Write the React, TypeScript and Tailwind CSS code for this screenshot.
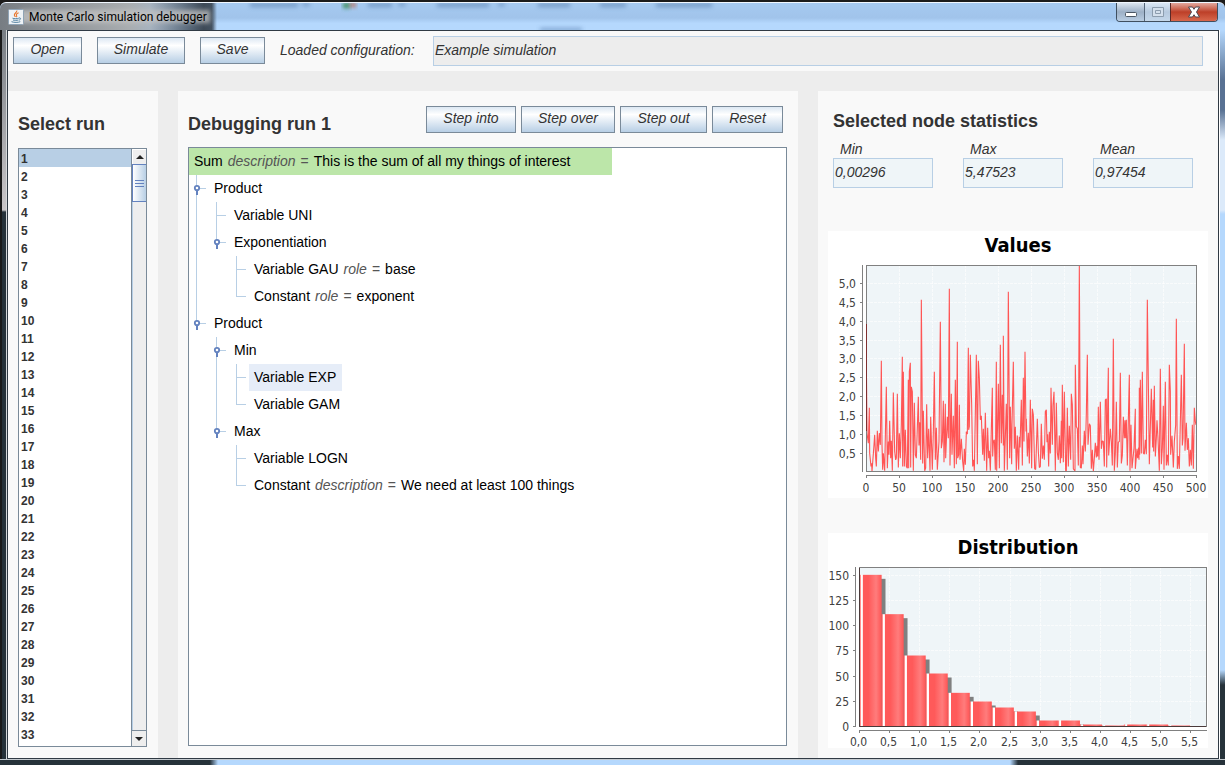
import React, { useState } from "react";

const VALUES_TRACE =
  "139,300 142,625 146,655 149,549 150,685 154,725 156,715 157,740 160,700 163,660 165,630 168,700 170,725 173,618 176,680 179,625 182,660 185,408 187,660 189,735 191,685 195,738 200,486 203,730 206,650 208,690 210,588 213,700 215,648 218,738 221,503 225,680 228,705 230,700 233,507 236,728 239,625 242,700 245,600 248,396 249,725 251,441 254,725 257,615 260,725 263,730 266,465 267,730 269,440 272,414 273,728 275,486 278,500 281,738 284,534 287,690 290,700 296,516 298,662 300,592 303,705 305,225 309,716 311,558 315,738 318,730 321,538 324,700 327,612 331,738 333,576 338,735 341,620 344,441 347,705 350,609 353,735 358,650 362,291 365,670 368,650 371,528 373,712 377,537 378,700 383,576 386,640 389,192 391,722 395,507 397,690 401,573 404,730 407,465 410,718 413,351 414,700 417,690 419,540 421,705 425,642 429,710 432,738 434,672 437,720 440,620 443,628 446,369 447,615 449,605 452,390 456,540 459,725 462,705 464,738 470,390 473,718 476,408 479,460 482,585 485,573 489,690 491,612 494,708 497,564 501,738 504,609 507,700 509,678 512,738 518,489 519,695 521,650 524,645 527,735 530,411 531,738 536,477 539,730 542,360 545,655 548,510 551,662 551,333 554,738 560,537 563,735 566,201 570,700 572,546 576,718 577,600 581,411 584,672 587,606 590,738 593,632 597,735 599,636 " +
  "601,668 605,525 608,722 611,459 613,650 616,381 619,620 620,582 623,695 626,624 629,716 632,525 636,730 638,552 641,570 645,732 648,734 653,582 656,680 659,728 662,725 665,597 668,702 671,662 674,705 677,560 680,555 682,652 684,628 687,725 689,621 692,686 694,489 698,660 700,540 703,501 707,738 710,534 713,684 716,705 719,632 722,715 725,588 726,700 728,480 731,712 734,501 738,738 740,738 743,549 746,725 749,603 753,705 755,507 758,540 761,732 766,738 767,420 770,605 773,612 776,722 779,122 782,728 785,730 788,662 790,718 794,618 797,680 800,567 803,390 805,660 809,597 812,603 815,732 818,675 821,740 824,700 827,654 830,698 832,663 834,695 836,546 838,705 842,531 845,672 848,648 851,650 854,725 857,525 860,522 861,728 866,429 867,692 872,612 875,650 878,722 881,342 884,738 887,685 890,531 893,728 896,652 899,650 902,444 905,716 908,692 911,576 914,640 916,586 918,640 920,585 923,722 929,450 931,738 934,600 937,730 940,700 943,670 947,552 947,732 952,672 954,700 957,668 958,705 959,489 960,690 962,465 965,686 968,441 971,685 974,688 977,645 980,688 983,225 989,718 995,492 999,668 1001,525 1002,680 1004,483 1007,695 1010,640 1012,586 1015,640 1019,738 1022,432 1025,718 1028,670 1031,543 1033,735 1037,471 1040,722 1043,690 1046,722 1049,420 1052,500 1053,690 1057,633 1061,728 1064,650 1068,600 1070,282 1073,732 1076,694 1079,732 1085,450 1088,662 1090,640 1094,357 1096,678 1100,594 1103,675 1106,640 1109,725 1112,675 1115,722 1118,600 1121,732 1124,549 1127,590 1129,600";

const BAR_TOPS = [134, 252, 376, 430, 488, 514, 532, 544, 571, 571, 583, 586, 583, 583, 586];
const BAR_WIDTH = 66;

type Guide = "pipe" | "tee" | "end" | "knob" | "knobEnd" | "none";

interface TreeNode {
  guides: Guide[];
  label: string;
  attribute?: string;
  value?: string;
}

const NODES: TreeNode[] = [
  { guides: [], label: "Sum", attribute: "description", value: "This is the sum of all my things of interest" },
  { guides: ["knob"], label: "Product" },
  { guides: ["pipe", "tee"], label: "Variable UNI" },
  { guides: ["pipe", "knobEnd"], label: "Exponentiation" },
  { guides: ["pipe", "none", "tee"], label: "Variable GAU", attribute: "role", value: "base" },
  { guides: ["pipe", "none", "end"], label: "Constant", attribute: "role", value: "exponent" },
  { guides: ["knobEnd"], label: "Product" },
  { guides: ["none", "knob"], label: "Min" },
  { guides: ["none", "pipe", "tee"], label: "Variable EXP" },
  { guides: ["none", "pipe", "end"], label: "Variable GAM" },
  { guides: ["none", "knobEnd"], label: "Max" },
  { guides: ["none", "none", "tee"], label: "Variable LOGN" },
  { guides: ["none", "none", "end"], label: "Constant", attribute: "description", value: "We need at least 100 things" },
];

function TreeGuide({ kind }: { kind: Guide }) {
  const full = kind === "pipe" || kind === "tee" || kind === "knob";
  const knob = kind === "knob" || kind === "knobEnd";
  return (
    <svg width="20" height="27" viewBox="0 0 20 27" className="shrink-0" aria-hidden="true">
      {kind !== "none" && <path d={full ? "M7.5 0V27" : "M7.5 0V14"} stroke="#b8cfe5" />}
      {kind !== "none" && kind !== "pipe" && <path d="M7 13.5H17" stroke="#b8cfe5" />}
      {knob && (
        <>
          <path d="M8 15V20" stroke="#6382bf" strokeWidth="2" />
          <circle cx="8" cy="13" r="2.2" fill="#fff" stroke="#6382bf" strokeWidth="1.8" />
        </>
      )}
    </svg>
  );
}

function MetalButton({ children, className = "" }: { children: React.ReactNode; className?: string }) {
  return (
    <button
      type="button"
      className={
        "h-[27px] border border-[#7a8a99] bg-linear-to-b from-[#dde8f3] via-white via-30% to-[#b8cfe5] pb-[2px] text-sm leading-[23px] text-[#333] italic " +
        className
      }
    >
      {children}
    </button>
  );
}

function StatField({ id, label, value }: { id: string; label: string; value: string }) {
  return (
    <div className="w-[100px]">
      <label htmlFor={id} className="block pl-[7px] text-sm leading-[18px] italic">
        {label}
      </label>
      <input
        id={id}
        readOnly
        value={value}
        className="block h-[30px] w-full border border-[#b8cfe5] bg-[#eff5f8] px-px pb-[2px] text-sm italic outline-none"
      />
    </div>
  );
}

const CHART_FONT = "[font-family:'DejaVu_Sans_Condensed','DejaVu_Sans',sans-serif]";

function ValuesChart() {
  const yTicks = [5, 4.5, 4, 3.5, 3, 2.5, 2, 1.5, 1, 0.5];
  const xTicks = [0, 50, 100, 150, 200, 250, 300, 350, 400, 450, 500];
  const yOf = (v: number) => Math.round(240.5 - v * 37.7) + 0.5;
  const xOf = (v: number) => Math.round(38 + v * 0.66) + 0.5;
  return (
    <svg viewBox="0 0 380 267" className={"block w-full bg-white " + CHART_FONT} role="img" aria-label="Values">
      <text x="190" y="21" textAnchor="middle" fontSize="20" fontWeight="bold" fill="#000">
        Values
      </text>
      <rect x="38" y="34" width="331" height="207" fill="#eff5f8" />
      {yTicks.map((v) => (
        <g key={v}>
          <path d={`M38 ${yOf(v)}H368`} stroke="#fff" strokeOpacity=".6" strokeDasharray="3 1" />
          <path d={`M32 ${yOf(v)}H35`} stroke="#808080" />
          <text x="28" y={yOf(v) + 4} textAnchor="end" fontSize="12" fill="#404040">
            {v.toFixed(1).replace(".", ",")}
          </text>
        </g>
      ))}
      {xTicks.map((v) => (
        <g key={v}>
          <path d={`M${xOf(v)} 34V240`} stroke="#fff" strokeOpacity=".6" strokeDasharray="3 1" />
          <path d={`M${xOf(v)} 244V247`} stroke="#808080" />
          <text x={xOf(v) - 0.5} y="261" textAnchor="middle" fontSize="12" fill="#404040">
            {v}
          </text>
        </g>
      ))}
      <path d="M34.5 34V241M38 244.5H369" stroke="#808080" />
      <svg x="38" y="34.5" width="330" height="206" viewBox="139 122 990 618" preserveAspectRatio="none">
        <polyline points={VALUES_TRACE} fill="none" stroke="#ff5555" strokeWidth="3.3" strokeLinejoin="bevel" />
      </svg>
      <rect x="38.5" y="34.5" width="330" height="206" fill="none" stroke="#808080" />
      <path d="M38.5 93V200" stroke="#803030" />
    </svg>
  );
}

function DistributionChart() {
  const yTicks = [150, 125, 100, 75, 50, 25, 0];
  const xTicks = [0, 0.5, 1, 1.5, 2, 2.5, 3, 3.5, 4, 4.5, 5, 5.5];
  const yOf = (v: number) => Math.round(193 - v * 1.008) + 0.5;
  const xOf = (v: number) => Math.round(31 + v * 60.2) + 0.5;
  return (
    <svg
      viewBox="0 0 380 215"
      className={"block w-full overflow-visible bg-white " + CHART_FONT}
      role="img"
      aria-label="Distribution"
    >
      <defs>
        <linearGradient id="bar">
          <stop offset="0" stopColor="#ff5555" />
          <stop offset=".05" stopColor="#ff9a9a" />
          <stop offset=".08" stopColor="#fff" />
          <stop offset=".13" stopColor="#fff" />
          <stop offset=".17" stopColor="#ff5a5a" />
          <stop offset=".4" stopColor="#ff5a5a" />
          <stop offset=".75" stopColor="#ff7c7c" />
          <stop offset="1" stopColor="#ff5555" />
        </linearGradient>
      </defs>
      <text x="190" y="21" textAnchor="middle" fontSize="20" fontWeight="bold" fill="#000">
        Distribution
      </text>
      <rect x="31" y="34" width="348" height="160" fill="#eff5f8" />
      {yTicks.map((v) => (
        <g key={v}>
          <path d={`M31 ${yOf(v)}H378`} stroke="#fff" strokeOpacity=".6" strokeDasharray="3 1" />
          <path d={`M25 ${yOf(v)}H28`} stroke="#808080" />
          <text x="21" y={yOf(v) + 4} textAnchor="end" fontSize="12" fill="#404040">
            {v}
          </text>
        </g>
      ))}
      {xTicks.map((v) => (
        <g key={v}>
          <path d={`M${xOf(v)} 34V193`} stroke="#fff" strokeOpacity=".6" strokeDasharray="3 1" />
          <path d={`M${xOf(v)} 197V200`} stroke="#808080" />
          <text x={xOf(v) - 1} y="213" textAnchor="middle" fontSize="12" fill="#404040">
            {v.toFixed(1).replace(".", ",")}
          </text>
        </g>
      ))}
      <path d="M27.5 34V194M31 197.5H379" stroke="#808080" />
      <svg x="31.5" y="34.5" width="347" height="159" viewBox="118 112 1041 477" preserveAspectRatio="none">
        {BAR_TOPS.map((top, i) => (
          <rect key={i} x={130 + i * 66.1} y={top + 12} width={BAR_WIDTH} height={Math.max(0, 577 - top)} fill="#808080" />
        ))}
        {BAR_TOPS.map((top, i) => (
          <rect key={i} x={118 + i * 66.1} y={top} width={BAR_WIDTH + 0.4} height={589 - top} fill="url(#bar)" />
        ))}
      </svg>
      <rect x="31.5" y="34.5" width="347" height="159" fill="none" stroke="#808080" />
      <path d="M31.5 35V193.5H378" fill="none" stroke="#4a3a3a" />
    </svg>
  );
}

function JavaIcon() {
  return (
    <svg width="16" height="16" viewBox="0 0 16 16" className="z-10 shrink-0" aria-hidden="true">
      <rect x=".5" y=".5" width="15" height="15" rx="1" fill="#eef2f6" stroke="#8fa3b5" />
      <path
        d="M8.8 1.5C9.4 3.6 5.6 4.4 6.4 6.4c.2.6.8 1 .9 1.6M10.6 3.8C8.6 4.7 7.8 5.6 8.6 6.7c.4.6.2 1-.2 1.5"
        fill="none"
        stroke="#e8762c"
        strokeWidth="1.1"
      />
      <path
        d="M4.5 9.2c1.5.7 4.8.6 6.3 0M5 11c1.5.5 3.8.5 5.3 0M3.500 12.700c2.400.9 6.800.9 8.800 0M11 9c2-.6 2.300 1.600-.2 2.200"
        fill="none"
        stroke="#5382a1"
      />
    </svg>
  );
}

function TitleBar() {
  return (
    <header className="relative flex h-7 items-start justify-between rounded-t-md border-t border-white/80 bg-linear-to-b from-[#a5c9f0] via-[#a1c4eb] via-55% to-[#b5d8fd] to-75%">
      <div className="flex h-[27px] w-[214px] items-center gap-[5px] rounded-tl-md bg-linear-to-r from-[#777d83] via-[#a9adb0] via-60% to-[#a1c4eb] pl-2">
        <JavaIcon />
        <h1 className="z-10 text-xs whitespace-nowrap text-black [font-family:Roboto,'Open_Sans',sans-serif]">
          Monte Carlo simulation debugger
        </h1>
      </div>
      <svg className="pointer-events-none absolute top-0 left-0" width="720" height="27" aria-hidden="true">
        <defs>
          <filter id="soft" x="-20%" y="-100%" width="140%" height="300%">
            <feGaussianBlur stdDeviation="2" />
          </filter>
          <linearGradient id="shade">
            <stop offset="0" stopColor="#2c353e" stopOpacity="0" />
            <stop offset=".8" stopColor="#2c353e" stopOpacity=".85" />
            <stop offset=".92" stopColor="#2c353e" stopOpacity=".8" />
            <stop offset="1" stopColor="#2c353e" stopOpacity="0" />
          </linearGradient>
        </defs>
        <rect x="150" y="0" width="67" height="27" fill="url(#shade)" />
        <rect x="20" y="7" width="190" height="13" fill="#c4c4c4" opacity=".75" filter="url(#soft)" />
        <g filter="url(#soft)" fill="#5f86b5" opacity=".7">
          <rect x="250" y="0" width="48" height="4" />
          <rect x="302" y="0" width="8" height="3" />
          <rect x="368" y="0" width="24" height="4" />
          <rect x="398" y="0" width="8" height="3" />
          <rect x="437" y="0" width="52" height="4" />
          <rect x="498" y="0" width="7" height="3" />
          <rect x="538" y="0" width="32" height="4" />
          <rect x="600" y="0" width="26" height="4" />
          <rect x="656" y="0" width="56" height="4" />
          <rect x="540" y="25" width="42" height="3" />
        </g>
        <rect x="343" y="0" width="7" height="5" fill="#398a52" filter="url(#soft)" />
        <rect x="350" y="0" width="6" height="4" fill="#b76c55" filter="url(#soft)" />
      </svg>
      <div className="mr-[7px] flex h-[19px] overflow-hidden rounded-b border border-t-0 border-[#3f4f60]">
        <button
          type="button"
          aria-label="Minimize"
          className="flex w-7 items-center justify-center border-r border-[#56677a] bg-linear-to-b from-[#dbe5f0] via-[#9db0c6] via-50% to-[#b9cde2]"
        >
          <svg width="14" height="14" viewBox="0 0 14 14" aria-hidden="true">
            <rect x="1.5" y="7.5" width="11" height="4" rx="1" fill="#fff" stroke="#4b5663" />
          </svg>
        </button>
        <button
          type="button"
          aria-label="Maximize"
          disabled
          className="flex w-[26px] items-center justify-center border-r border-[#5b2a28] bg-linear-to-b from-[#dbe8f5] via-[#b6c9de] via-50% to-[#c4d7ea]"
        >
          <svg width="14" height="14" viewBox="0 0 14 14" aria-hidden="true">
            <path d="M1.5 2.5h11v9h-11zM4.5 5.5h5v3h-5z" fill="#d4e0ed" stroke="#8c9dae" />
          </svg>
        </button>
        <button
          type="button"
          aria-label="Close"
          className="flex w-[46px] items-center justify-center bg-linear-to-b from-[#e2a79d] via-[#bd3f28] via-50% to-[#d8674c]"
        >
          <svg width="14" height="14" viewBox="0 0 14 14" aria-hidden="true">
            <path d="M1.5 2H5.500L7 4.300L8.500 2H12.500L9.500 7L12.500 12H8.500L7 9.700L5.500 12H1.500L4.500 7Z" fill="#fff" stroke="#4d4a55" />
          </svg>
        </button>
      </div>
    </header>
  );
}

function RunList() {
  const [selected, setSelected] = useState(1);
  const runs = Array.from({ length: 33 }, (_, i) => i + 1);
  return (
    <div className="mt-3 flex flex-1 border border-[#7a8a99] bg-white">
      <ul className="flex-1">
        {runs.map((run) => (
          <li key={run}>
            <button
              type="button"
              onClick={() => setSelected(run)}
              className={
                "block h-[18px] w-full pt-px pl-[2px] text-left text-xs leading-[18px] font-bold " +
                (run === selected ? "bg-[#b8cfe5]" : "")
              }
            >
              {run}
            </button>
          </li>
        ))}
      </ul>
      <div className="flex w-[15px] flex-col border-l border-[#7a8a99] bg-[#eee]">
        <button
          type="button"
          aria-label="Scroll up"
          className="flex h-[15px] items-center justify-center border-t border-l border-white"
        >
          <svg width="8" height="4" viewBox="0 0 8 4" aria-hidden="true">
            <path d="M0 4L4 0L8 4z" fill="#222" />
          </svg>
        </button>
        <div className="flex h-[38px] flex-col items-center justify-center gap-[2px] border-y border-l border-[#6382bf] bg-linear-to-r from-white to-[#b8cfe5]">
          <div className="h-px w-[9px] bg-[#6382bf]" />
          <div className="h-px w-[9px] bg-[#6382bf]" />
          <div className="h-px w-[9px] bg-[#6382bf]" />
        </div>
        <div className="flex-1 border-l border-[#b8cfe5]" />
        <button
          type="button"
          aria-label="Scroll down"
          className="flex h-4 items-center justify-center border-t border-[#7a8a99]"
        >
          <svg width="8" height="4" viewBox="0 0 8 4" aria-hidden="true">
            <path d="M0 0L4 4L8 0z" fill="#222" />
          </svg>
        </button>
      </div>
    </div>
  );
}

function ExpressionTree() {
  return (
    <ul className="mt-[11px] flex-1 border border-[#7a8a99] bg-white text-sm text-black">
      {NODES.map((node, i) => (
        <li key={i} className="flex h-[27px]">
          {node.guides.map((kind, g) => (
            <TreeGuide key={g} kind={kind} />
          ))}
          <span
            className={
              "flex gap-[5px] pl-[5px] leading-[27px] whitespace-nowrap " +
              (i === 0 ? "bg-[#bce6a9] pr-[42px]" : i === 8 ? "bg-[#e6edf8] pr-[6px]" : "pr-[5px]")
            }
          >
            <span>{node.label}</span>
            {node.attribute && (
              <>
                <em className="text-[#555]">{node.attribute}</em>
                <span className="text-[#555]">=</span>
                <span>{node.value}</span>
              </>
            )}
          </span>
        </li>
      ))}
    </ul>
  );
}

export default function App() {
  return (
    <div className="flex min-h-screen flex-col bg-[#1b1b1b] pt-[2px] text-[#333] [font-family:'Liberation_Sans',Arial,sans-serif]">
      <TitleBar />
      <div className="flex flex-1">
        <div className="w-[7px] border-r border-l-2 border-r-[#d5d8da] border-l-[#1a1a1a] bg-[linear-gradient(to_bottom,#777d83,#c9c6c8_180px,#26323a_182px)]" />
        <div className="flex flex-1 flex-col border border-[#303a44] bg-[#ededed]">
          <div className="flex h-10 items-start bg-[#f9f9f9] pt-[5px] pr-[15px] pl-[5px]">
            <div className="flex gap-[15px] pt-px">
              <MetalButton className="w-[69px]">Open</MetalButton>
              <MetalButton className="w-[88px]">Simulate</MetalButton>
              <MetalButton className="w-[65px]">Save</MetalButton>
            </div>
            <label
              htmlFor="configuration"
              className="ml-[15px] w-[138px] text-sm leading-7 whitespace-nowrap italic"
            >
              Loaded configuration:
            </label>
            <input
              id="configuration"
              readOnly
              value="Example simulation"
              className="ml-[15px] h-[30px] flex-1 border border-[#b8cfe5] bg-[#ededed] px-px pb-[2px] text-sm italic outline-none"
            />
          </div>
          <main className="mt-5 flex flex-1 gap-5">
            <section className="flex w-[150px] flex-col bg-[#f9f9f9] pt-[21px] pr-[11px] pb-[11px] pl-[10px]">
              <h2 className="text-lg leading-6 font-bold">Select run</h2>
              <RunList />
            </section>
            <section className="flex flex-1 flex-col bg-[#f9f9f9] pt-[15px] pr-[11px] pb-3 pl-[10px]">
              <div className="flex justify-between pr-1">
                <h2 className="mt-[6px] text-lg leading-6 font-bold">Debugging run 1</h2>
                <div className="flex gap-[5px]">
                  <MetalButton className="w-[90px]">Step into</MetalButton>
                  <MetalButton className="w-[94px]">Step over</MetalButton>
                  <MetalButton className="w-[87px]">Step out</MetalButton>
                  <MetalButton className="w-[71px]">Reset</MetalButton>
                </div>
              </div>
              <ExpressionTree />
            </section>
            <section className="w-[400px] bg-[#f9f9f9] px-[10px] pt-[18px] pb-[10px]">
              <div className="pl-[5px]">
                <h2 className="text-lg leading-6 font-bold">Selected node statistics</h2>
                <div className="mt-[7px] flex gap-[30px]">
                  <StatField id="min" label="Min" value="0,00296" />
                  <StatField id="max" label="Max" value="5,47523" />
                  <StatField id="mean" label="Mean" value="0,97454" />
                </div>
              </div>
              <div className="mt-[43px] flex flex-col gap-[35px]">
                <ValuesChart />
                <DistributionChart />
              </div>
            </section>
          </main>
        </div>
        <div className="w-[6px] border-l border-white bg-[linear-gradient(to_bottom,#b5d8fd,#587193_50px,#587193_80px,#dceafa_110px,#dceafa_180px,#b5d8fd_184px,#b5d8fd_640px,#26323a_655px)]" />
      </div>
      <div className="h-[6px] border-t border-[#c5cbd0] bg-[linear-gradient(to_right,#26323a_210px,#b5d8fd_218px,#b5d8fd_1010px,#26323a_1018px)]" />
    </div>
  );
}
